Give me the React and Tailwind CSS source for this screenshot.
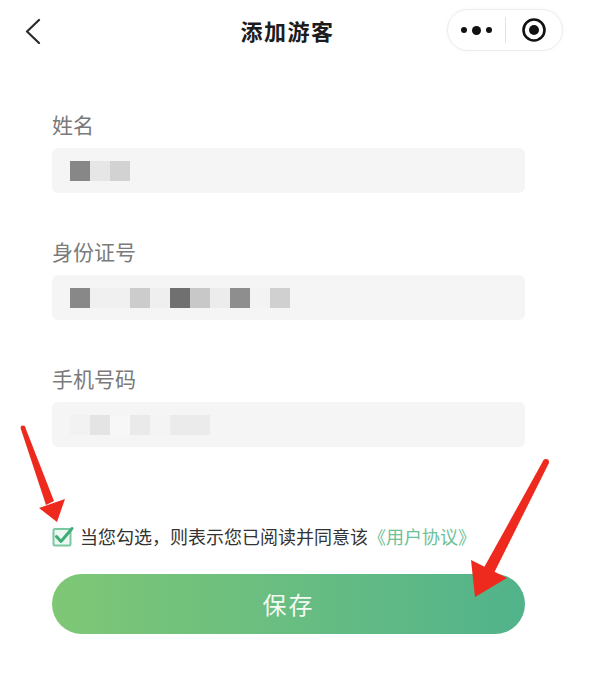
import React from 'react';

const blocks = {
    name: [
        { w: 20, c: '#878787' },
        { w: 20, c: '#e6e6e6' },
        { w: 20, c: '#d2d2d2' },
    ],
    idCard: [
        { w: 20, c: '#888888' },
        { w: 40, c: '#f0f0f0' },
        { w: 20, c: '#cccccc' },
        { w: 20, c: '#efefef' },
        { w: 20, c: '#707070' },
        { w: 20, c: '#c8c8c8' },
        { w: 20, c: '#ececec' },
        { w: 20, c: '#8e8e8e' },
        { w: 20, c: '#f3f3f3' },
        { w: 20, c: '#d0d0d0' },
    ],
    phone: [
        { w: 20, c: '#f2f2f2' },
        { w: 20, c: '#e4e4e4' },
        { w: 20, c: '#f7f7f7' },
        { w: 20, c: '#eaeaea' },
        { w: 20, c: '#f4f4f4' },
        { w: 40, c: '#ebebeb' },
    ],
};

const Field = ({ label, pixels, className }) => (
    <div className={className}>
        <div className="text-[21px] leading-[28px] text-[#7a7a7a]">{label}</div>
        <div className="mt-[10px] h-[45px] rounded-[6px] bg-[#f5f5f5] flex items-center pl-[18px]">
            <div className="flex h-[20px]">
                {pixels.map((p, i) => (
                    <span key={i} className="h-full" style={{ width: p.w, backgroundColor: p.c }} />
                ))}
            </div>
        </div>
    </div>
);

const App = () => {
    return (
        <div className="relative w-[598px] h-[674px] bg-white overflow-hidden font-['Noto_Sans_CJK_SC','Noto_Sans',sans-serif]">
            {/* nav bar */}
            <div className="grid grid-cols-[1fr_auto_1fr] items-center h-[60px] pl-[12px] pr-[35px]">
                <div className="flex items-center">
                    <svg width="20" height="28" viewBox="0 0 20 28" className="ml-[12px]">
                        <path d="M15 4 L3 15.5 L15 27" fill="none" stroke="#2b2b2b" strokeWidth="2.2" strokeLinecap="round" strokeLinejoin="round" />
                    </svg>
                </div>
                <div className="text-[22px] leading-[30px] font-semibold text-[#1c1c1c] tracking-[1.5px]">添加游客</div>
                <div className="flex justify-end">
                    <div className="flex items-center h-[42px] w-[116px] rounded-full border border-[#ededed] bg-white shadow-[0_0_4px_rgba(0,0,0,0.04)]">
                        <div className="flex-1 flex justify-center items-center gap-[5px]">
                            <span className="w-[6px] h-[6px] rounded-full bg-[#111]" />
                            <span className="w-[9px] h-[9px] rounded-full bg-[#111]" />
                            <span className="w-[6px] h-[6px] rounded-full bg-[#111]" />
                        </div>
                        <div className="w-px h-[26px] bg-[#e2e2e2]" />
                        <div className="flex-1 flex justify-center items-center">
                            <svg width="26" height="26" viewBox="0 0 26 26">
                                <circle cx="13" cy="13" r="10.5" fill="none" stroke="#111" strokeWidth="2.6" />
                                <circle cx="13" cy="13" r="5" fill="#111" />
                            </svg>
                        </div>
                    </div>
                </div>
            </div>

            {/* form */}
            <div className="pl-[52px] pr-[73px] pt-[50px]">
                <Field label="姓名" pixels={blocks.name} />
                <Field label="身份证号" pixels={blocks.idCard} className="mt-[44px]" />
                <Field label="手机号码" pixels={blocks.phone} className="mt-[44px]" />

                <div className="mt-[77px] flex items-center h-[24px]">
                    <svg width="22" height="21" viewBox="0 0 22 21" className="shrink-0">
                        <rect x="1.5" y="3" width="17" height="16.5" rx="1.5" fill="#eef8f2" stroke="#79c9a0" strokeWidth="2" />
                        <path d="M4.5 10.5 L9 15.5 L20 2.5" fill="none" stroke="#3fac78" strokeWidth="3" strokeLinecap="round" strokeLinejoin="round" />
                    </svg>
                    <span className="ml-[6px] text-[18px] leading-[24px] text-[#333] whitespace-nowrap">
                        当您勾选，则表示您已阅读并同意该<span className="text-[#6cc196]">《用户协议》</span>
                    </span>
                </div>

                <button
                    type="button"
                    className="mt-[26px] w-full h-[60px] rounded-full bg-gradient-to-r from-[#7ec775] to-[#51b38b] text-[24px] text-[#f2faf2] tracking-[2px]"
                >
                    保存
                </button>
            </div>

            {/* red annotation arrows */}
            <svg className="absolute inset-0 pointer-events-none" width="598" height="674" viewBox="0 0 598 674">
                <g fill="#ee2a1e">
                    <circle cx="23" cy="428" r="2.4" />
                    <polygon points="20.8,428.8 25.2,427.2 54,501 46,505" />
                    <polygon points="57,522 39,508 65,499" />
                    <circle cx="546" cy="462" r="3" />
                    <polygon points="543.3,460.6 548.7,463.4 494,573 484,567.5" />
                    <polygon points="475,597 471,560 507,578" />
                </g>
            </svg>
        </div>
    );
};

export default App;
